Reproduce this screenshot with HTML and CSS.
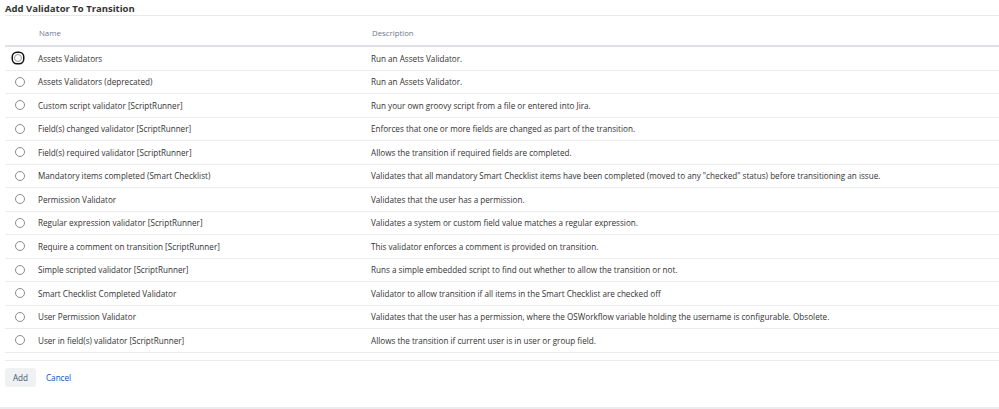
FILE: index.html
```html
<!DOCTYPE html>
<html>
<head>
    <meta charset="UTF-8">
    <title>Add Validator To Transition</title>
    <link rel="stylesheet" href="styles.css">
</head>
<body>
<div class="page">
    <h2 class="title">Add Validator To Transition</h2>
    <table class="list">
        <thead>
        <tr>
            <th class="col-radio"></th>
            <th class="col-name">Name</th>
            <th>Description</th>
        </tr>
        </thead>
        <tbody>
        <tr>
            <td class="col-radio"><span class="radio focus"><i></i></span></td>
            <td>Assets Validators</td>
            <td>Run an Assets Validator.</td>
        </tr>
        <tr>
            <td class="col-radio"><span class="radio"><i></i></span></td>
            <td>Assets Validators (deprecated)</td>
            <td>Run an Assets Validator.</td>
        </tr>
        <tr>
            <td class="col-radio"><span class="radio"><i></i></span></td>
            <td>Custom script validator [ScriptRunner]</td>
            <td>Run your own groovy script from a file or entered into Jira.</td>
        </tr>
        <tr>
            <td class="col-radio"><span class="radio"><i></i></span></td>
            <td>Field(s) changed validator [ScriptRunner]</td>
            <td>Enforces that one or more fields are changed as part of the transition.</td>
        </tr>
        <tr>
            <td class="col-radio"><span class="radio"><i></i></span></td>
            <td>Field(s) required validator [ScriptRunner]</td>
            <td>Allows the transition if required fields are completed.</td>
        </tr>
        <tr>
            <td class="col-radio"><span class="radio"><i></i></span></td>
            <td>Mandatory items completed (Smart Checklist)</td>
            <td>Validates that all mandatory Smart Checklist items have been completed (moved to any "checked" status) before transitioning an issue.</td>
        </tr>
        <tr>
            <td class="col-radio"><span class="radio"><i></i></span></td>
            <td>Permission Validator</td>
            <td>Validates that the user has a permission.</td>
        </tr>
        <tr>
            <td class="col-radio"><span class="radio"><i></i></span></td>
            <td>Regular expression validator [ScriptRunner]</td>
            <td>Validates a system or custom field value matches a regular expression.</td>
        </tr>
        <tr>
            <td class="col-radio"><span class="radio"><i></i></span></td>
            <td>Require a comment on transition [ScriptRunner]</td>
            <td>This validator enforces a comment is provided on transition.</td>
        </tr>
        <tr>
            <td class="col-radio"><span class="radio"><i></i></span></td>
            <td>Simple scripted validator [ScriptRunner]</td>
            <td>Runs a simple embedded script to find out whether to allow the transition or not.</td>
        </tr>
        <tr>
            <td class="col-radio"><span class="radio"><i></i></span></td>
            <td>Smart Checklist Completed Validator</td>
            <td>Validator to allow transition if all items in the Smart Checklist are checked off</td>
        </tr>
        <tr>
            <td class="col-radio"><span class="radio"><i></i></span></td>
            <td>User Permission Validator</td>
            <td>Validates that the user has a permission, where the OSWorkflow variable holding the username is configurable. Obsolete.</td>
        </tr>
        <tr>
            <td class="col-radio"><span class="radio"><i></i></span></td>
            <td>User in field(s) validator [ScriptRunner]</td>
            <td>Allows the transition if current user is in user or group field.</td>
        </tr>
        </tbody>
    </table>
    <div class="buttons">
        <a href="javascript:;" class="btn">Add</a>
        <a href="javascript:;" class="cancel">Cancel</a>
    </div>
</div>
</body>
</html>
```

FILE: styles.css
```css
body, div, h2, table, a {
    margin: 0;
    padding: 0;
}

body {
    background: #fff;
    font-family: "Open Sans", "Noto Sans", sans-serif;
    font-size: 8.15px;
    color: #333;
}

a {
    text-decoration: none;
}

.page {
    padding-left: 5px;
    height: 407px;
    border-bottom: 2px solid #ebecf0;
}

/*标题*/
.title {
    height: 15px;
    line-height: 18px;
    font-size: 9.5px;
    font-weight: bold;
    color: #333;
    border-bottom: 1px solid #e8e8ea;
}

/*列表*/
.list {
    width: 100%;
    border-collapse: collapse;
}

.list th {
    height: 22px;
    padding-top: 6px;
    text-align: left;
    font-weight: normal;
    font-size: 7.8px;
    color: #6b778c;
    border-bottom: 2px solid #dfe1e6;
}

.list td {
    height: 22.5px;
    padding: 0;
    border-bottom: 1px solid #ebecf0;
    white-space: nowrap;
}

.list .col-radio {
    width: 33px;
    padding: 0;
}

.list th.col-name {
    width: 331px;
}

.radio {
    display: block;
    margin-left: 10px;
    width: 8px;
    height: 8px;
    border: 1px solid #8c8c8c;
    border-radius: 50%;
}

.radio.focus {
    margin-left: 8px;
    width: 10px;
    height: 10px;
    border: 0;
    box-shadow: 0 0 0 1.5px #111;
    border-radius: 4px;
    position: relative;
}

.radio.focus i {
    position: absolute;
    top: 1px;
    left: 1px;
    width: 6px;
    height: 6px;
    border: 1px solid #9a9a9a;
    border-radius: 50%;
}

/*按钮*/
.buttons {
    margin-top: 7px;
    border-top: 1px solid #ebecf0;
    padding-top: 7px;
    display: flex;
    align-items: center;
}

.btn {
    display: block;
    width: 31px;
    height: 19px;
    line-height: 19px;
    text-align: center;
    background: #f0f1f3;
    border-radius: 3px;
    color: #42526e;
}

.cancel {
    margin-left: 10px;
    color: #0052cc;
}
```
